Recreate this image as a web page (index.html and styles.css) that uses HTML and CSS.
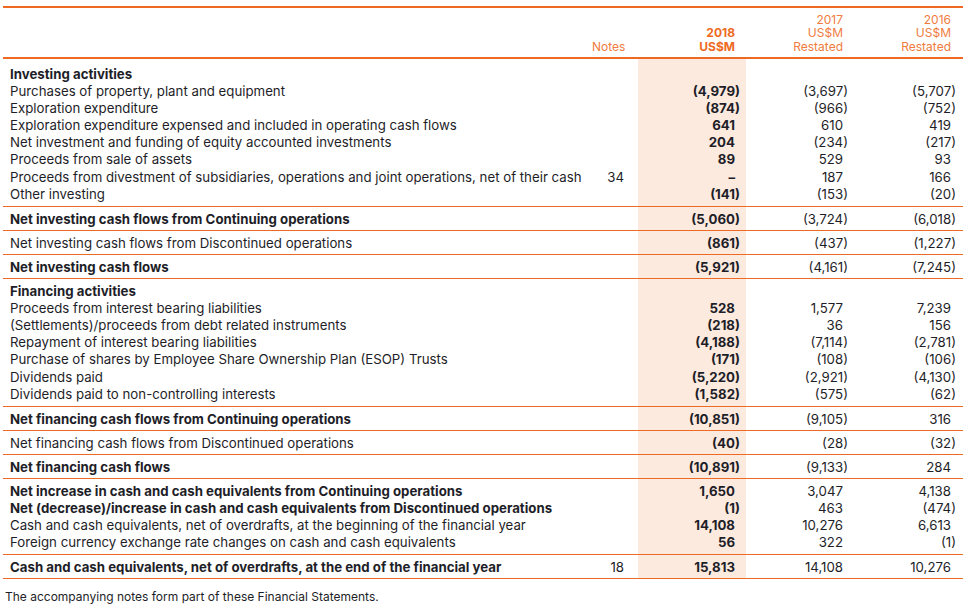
FILE: index.html
```html
<!DOCTYPE html>
<html lang="en">
<head>
<meta charset="utf-8">
<title>Consolidated Cash Flow Statement</title>
<link rel="stylesheet" href="styles.css">
</head>
<body>
<div class="sheet">
  <div class="row head">
    <div class="c lbl"></div>
    <div class="c nt">Notes</div>
    <div class="c num cur">2018<br>US$M</div>
    <div class="c num">2017<br>US$M<br>Restated</div>
    <div class="c num">2016<br>US$M<br>Restated</div>
  </div>
  <div class="body">
    <div class="grp lead">
      <div class="row b"><div class="c lbl">Investing activities</div><div class="c nt"></div><div class="c num cur"></div><div class="c num"></div><div class="c num"></div></div>
      <div class="row"><div class="c lbl">Purchases of property, plant and equipment</div><div class="c nt"></div><div class="c num cur"><span class="neg">(4,979)</span></div><div class="c num"><span class="neg">(3,697)</span></div><div class="c num"><span class="neg">(5,707)</span></div></div>
      <div class="row"><div class="c lbl">Exploration expenditure</div><div class="c nt"></div><div class="c num cur"><span class="neg">(874)</span></div><div class="c num"><span class="neg">(966)</span></div><div class="c num"><span class="neg">(752)</span></div></div>
      <div class="row"><div class="c lbl">Exploration expenditure expensed and included in operating cash flows</div><div class="c nt"></div><div class="c num cur">641</div><div class="c num">610</div><div class="c num">419</div></div>
      <div class="row"><div class="c lbl">Net investment and funding of equity accounted investments</div><div class="c nt"></div><div class="c num cur">204</div><div class="c num"><span class="neg">(234)</span></div><div class="c num"><span class="neg">(217)</span></div></div>
      <div class="row"><div class="c lbl">Proceeds from sale of assets</div><div class="c nt"></div><div class="c num cur">89</div><div class="c num">529</div><div class="c num">93</div></div>
      <div class="row"><div class="c lbl">Proceeds from divestment of subsidiaries, operations and joint operations, net of their cash</div><div class="c nt">34</div><div class="c num cur">–</div><div class="c num">187</div><div class="c num">166</div></div>
      <div class="row"><div class="c lbl">Other investing</div><div class="c nt"></div><div class="c num cur"><span class="neg">(141)</span></div><div class="c num"><span class="neg">(153)</span></div><div class="c num"><span class="neg">(20)</span></div></div>
    </div>
    <div class="grp single">
      <div class="row b"><div class="c lbl">Net investing cash flows from Continuing operations</div><div class="c nt"></div><div class="c num cur"><span class="neg">(5,060)</span></div><div class="c num"><span class="neg">(3,724)</span></div><div class="c num"><span class="neg">(6,018)</span></div></div>
    </div>
    <div class="grp single">
      <div class="row"><div class="c lbl">Net investing cash flows from Discontinued operations</div><div class="c nt"></div><div class="c num cur"><span class="neg">(861)</span></div><div class="c num"><span class="neg">(437)</span></div><div class="c num"><span class="neg">(1,227)</span></div></div>
    </div>
    <div class="grp single">
      <div class="row b"><div class="c lbl">Net investing cash flows</div><div class="c nt"></div><div class="c num cur"><span class="neg">(5,921)</span></div><div class="c num"><span class="neg">(4,161)</span></div><div class="c num"><span class="neg">(7,245)</span></div></div>
    </div>
    <div class="grp">
      <div class="row b"><div class="c lbl">Financing activities</div><div class="c nt"></div><div class="c num cur"></div><div class="c num"></div><div class="c num"></div></div>
      <div class="row"><div class="c lbl">Proceeds from interest bearing liabilities</div><div class="c nt"></div><div class="c num cur">528</div><div class="c num">1,577</div><div class="c num">7,239</div></div>
      <div class="row"><div class="c lbl">(Settlements)/proceeds from debt related instruments</div><div class="c nt"></div><div class="c num cur"><span class="neg">(218)</span></div><div class="c num">36</div><div class="c num">156</div></div>
      <div class="row"><div class="c lbl">Repayment of interest bearing liabilities</div><div class="c nt"></div><div class="c num cur"><span class="neg">(4,188)</span></div><div class="c num"><span class="neg">(7,114)</span></div><div class="c num"><span class="neg">(2,781)</span></div></div>
      <div class="row"><div class="c lbl">Purchase of shares by Employee Share Ownership Plan (ESOP) Trusts</div><div class="c nt"></div><div class="c num cur"><span class="neg">(171)</span></div><div class="c num"><span class="neg">(108)</span></div><div class="c num"><span class="neg">(106)</span></div></div>
      <div class="row"><div class="c lbl">Dividends paid</div><div class="c nt"></div><div class="c num cur"><span class="neg">(5,220)</span></div><div class="c num"><span class="neg">(2,921)</span></div><div class="c num"><span class="neg">(4,130)</span></div></div>
      <div class="row"><div class="c lbl">Dividends paid to non-controlling interests</div><div class="c nt"></div><div class="c num cur"><span class="neg">(1,582)</span></div><div class="c num"><span class="neg">(575)</span></div><div class="c num"><span class="neg">(62)</span></div></div>
    </div>
    <div class="grp single">
      <div class="row b"><div class="c lbl">Net financing cash flows from Continuing operations</div><div class="c nt"></div><div class="c num cur"><span class="neg">(10,851)</span></div><div class="c num"><span class="neg">(9,105)</span></div><div class="c num">316</div></div>
    </div>
    <div class="grp single">
      <div class="row"><div class="c lbl">Net financing cash flows from Discontinued operations</div><div class="c nt"></div><div class="c num cur"><span class="neg">(40)</span></div><div class="c num"><span class="neg">(28)</span></div><div class="c num"><span class="neg">(32)</span></div></div>
    </div>
    <div class="grp single">
      <div class="row b"><div class="c lbl">Net financing cash flows</div><div class="c nt"></div><div class="c num cur"><span class="neg">(10,891)</span></div><div class="c num"><span class="neg">(9,133)</span></div><div class="c num">284</div></div>
    </div>
    <div class="grp">
      <div class="row b"><div class="c lbl">Net increase in cash and cash equivalents from Continuing operations</div><div class="c nt"></div><div class="c num cur">1,650</div><div class="c num">3,047</div><div class="c num">4,138</div></div>
      <div class="row b"><div class="c lbl">Net (decrease)/increase in cash and cash equivalents from Discontinued operations</div><div class="c nt"></div><div class="c num cur"><span class="neg">(1)</span></div><div class="c num">463</div><div class="c num"><span class="neg">(474)</span></div></div>
      <div class="row"><div class="c lbl">Cash and cash equivalents, net of overdrafts, at the beginning of the financial year</div><div class="c nt"></div><div class="c num cur">14,108</div><div class="c num">10,276</div><div class="c num">6,613</div></div>
      <div class="row"><div class="c lbl">Foreign currency exchange rate changes on cash and cash equivalents</div><div class="c nt"></div><div class="c num cur">56</div><div class="c num">322</div><div class="c num"><span class="neg">(1)</span></div></div>
    </div>
    <div class="grp single last">
      <div class="row b"><div class="c lbl">Cash and cash equivalents, net of overdrafts, at the end of the financial year</div><div class="c nt">18</div><div class="c num cur">15,813</div><div class="c num">14,108</div><div class="c num">10,276</div></div>
    </div>
  </div>
  <p class="foot">The accompanying notes form part of these Financial Statements.</p>
</div>
</body>
</html>
```

FILE: styles.css
```css
* { box-sizing: border-box; }
html, body { margin: 0; padding: 0; background: #ffffff; }
body {
  font-family: "Inter", "Liberation Sans", sans-serif;
  color: #1e1e28;
  font-size: 13.25px;
}
.sheet {
  width: 960px;
  margin: 6px 0 0 3px;
}
.row {
  display: grid;
  grid-template-columns: 589px 46px 108px 108px 109px;
  line-height: 17.1px;
}
.c { white-space: nowrap; font-weight: 400; }
.lbl { padding-left: 7px; }
.nt { text-align: right; padding-right: 14px; }
.num { text-align: right; padding-right: 11px; }
.num:last-child { padding-right: 12px; }
.neg { margin-right: -5px; }

.head {
  border-top: 2px solid #ee6a22;
  border-bottom: 2px solid #ee6a22;
  color: #f07c40;
  font-size: 12px;
  line-height: 13.5px;
  height: 53px;
  align-items: end;
  padding-bottom: 4px;
}
.head .cur { font-weight: 700; color: #ee6a22; }

.body {
  background: linear-gradient(to right, transparent 635px, #fdeadf 635px, #fdeadf 743px, transparent 743px);
}
.grp { padding: 4px 0 3px; }
.grp + .grp { border-top: 1px solid #ec6a24; }
.grp.lead { padding-top: 7px; }
.grp.single { padding: 4px 0 2px; }
.grp.last { border-bottom: 1px solid #ec6a24; }

.b .lbl { font-weight: 700; }
.cur { font-weight: 700; }

.foot {
  margin: 10px 0 0 2px;
  font-size: 12px;
  line-height: 16px;
}
```
